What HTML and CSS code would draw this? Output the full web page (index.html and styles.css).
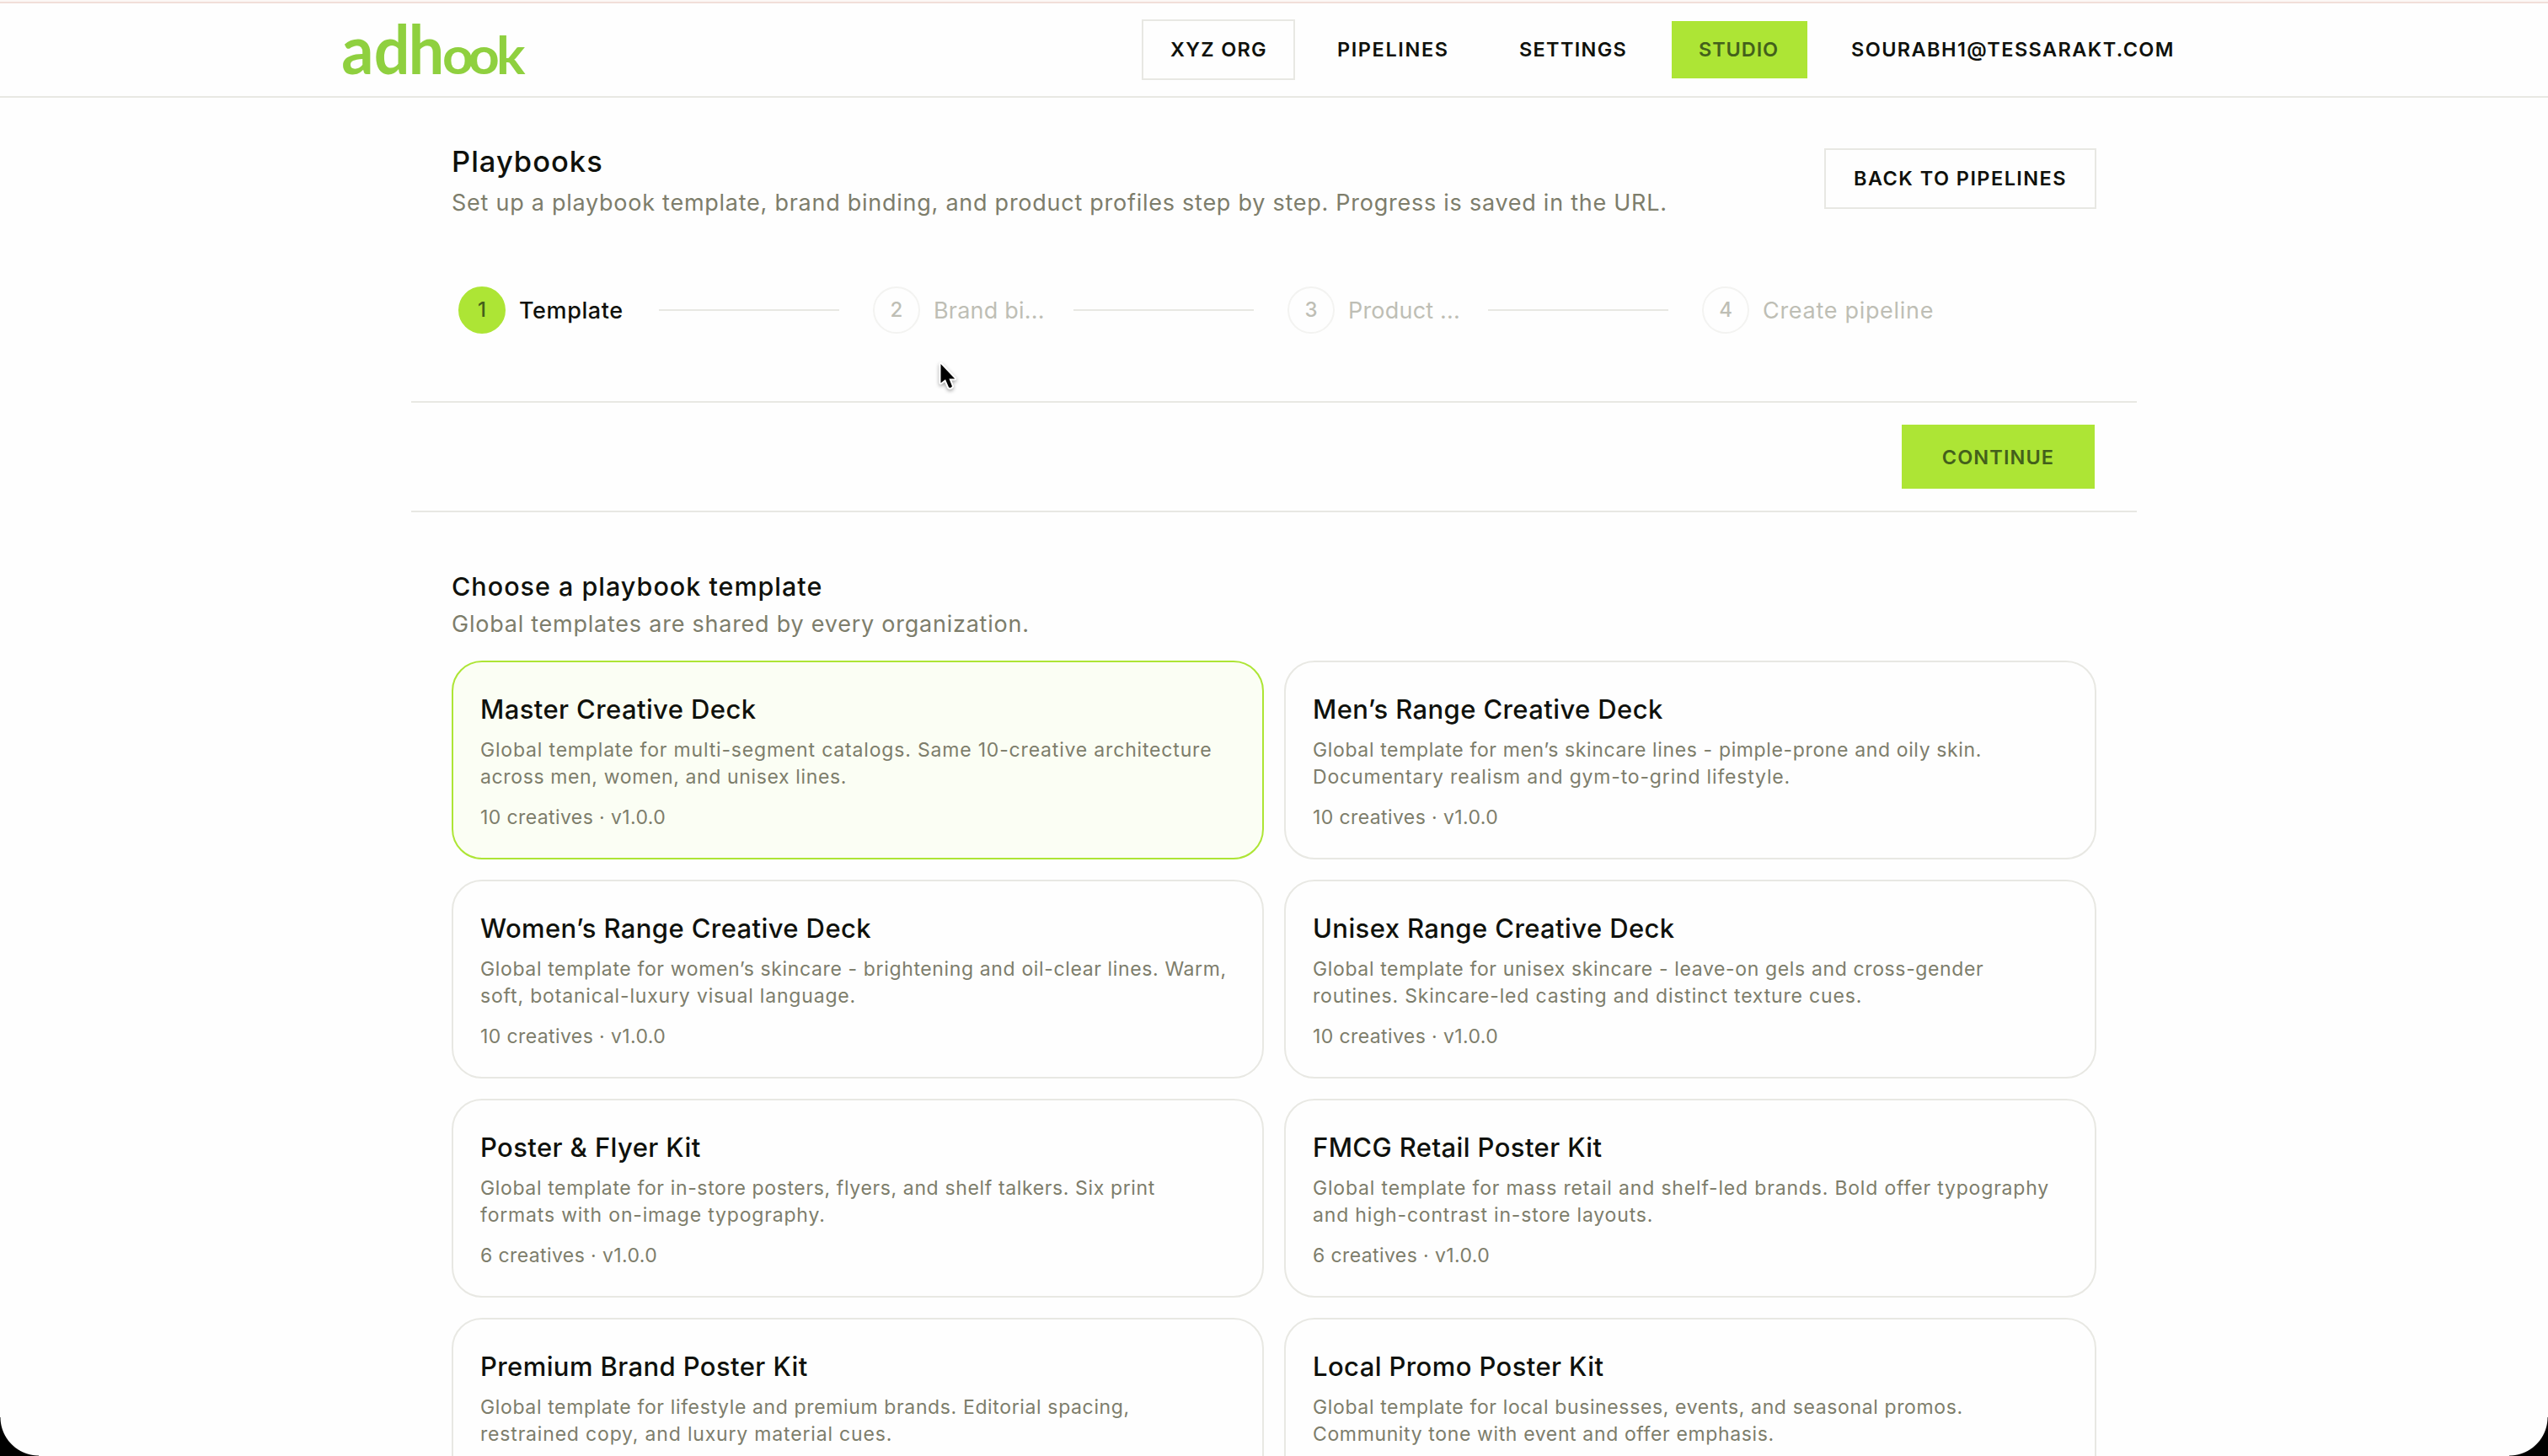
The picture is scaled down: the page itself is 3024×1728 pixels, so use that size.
FILE: index.html
```html
<!DOCTYPE html>
<html lang="en">
<head>
    <meta charset="UTF-8">
    <meta name="viewport" content="width=device-width, initial-scale=1.0">
    <title>Playbooks - adhook</title>
    <link rel="stylesheet" href="styles.css">
</head>
<body>
  <header class="navbar">
    <div class="navbar-inner">
      <a href="#" class="logo">
        <svg class="logo-img" viewBox="0 0 224 72" role="img" aria-label="adhook">
          <g transform="translate(0 64) scale(0.93 1)">
            <text class="logo-text"><tspan x="-3 38.5 82.5" class="logo-tall">adh</tspan></text>
          </g>
          <g transform="translate(0 64) scale(1.04 1)">
            <text class="logo-text"><tspan x="112.5 142 174" class="logo-round">ook</tspan></text>
          </g>
        </svg>
      </a>
      <nav class="nav-links">
        <a href="#" class="nav-link nav-org">XYZ Org</a>
        <a href="#" class="nav-link nav-pipelines">Pipelines</a>
        <a href="#" class="nav-link nav-settings">Settings</a>
        <a href="#" class="nav-link nav-studio">Studio</a>
        <a href="#" class="nav-link nav-user">sourabh1@tessarakt.com</a>
      </nav>
    </div>
  </header>

  <main class="container">
    <section class="page-header">
      <div>
        <h1>Playbooks</h1>
        <p class="subtitle">Set up a playbook template, brand binding, and product profiles step by step. Progress is saved in the URL.</p>
      </div>
      <a href="#" class="back-button">Back to pipelines</a>
    </section>

    <ol class="steps">
      <li class="step active">
        <span class="step-number">1</span>
        <span class="step-label">Template</span>
        <span class="step-line"></span>
      </li>
      <li class="step">
        <span class="step-number">2</span>
        <span class="step-label">Brand bi...</span>
        <span class="step-line"></span>
      </li>
      <li class="step">
        <span class="step-number">3</span>
        <span class="step-label">Product ...</span>
        <span class="step-line"></span>
      </li>
      <li class="step">
        <span class="step-number">4</span>
        <span class="step-label last">Create pipeline</span>
      </li>
    </ol>

    <div class="action-bar">
      <button class="continue-button">Continue</button>
    </div>

    <section class="templates">
      <h2>Choose a playbook template</h2>
      <p class="templates-note">Global templates are shared by every organization.</p>

      <div class="card-grid">
        <article class="card selected">
          <h3>Master Creative Deck</h3>
          <p class="card-text"><span class="wide">Global template for multi-segment catalogs. Same 10-creative architecture</span><br>across men, women, and unisex lines.</p>
          <p class="card-meta">10 creatives · v1.0.0</p>
        </article>
        <article class="card">
          <h3>Men’s Range Creative Deck</h3>
          <p class="card-text">Global template for men’s skincare lines - pimple-prone and oily skin.<br><span class="wide">Documentary realism and gym-to-grind lifestyle.</span></p>
          <p class="card-meta">10 creatives · v1.0.0</p>
        </article>
        <article class="card">
          <h3>Women’s Range Creative Deck</h3>
          <p class="card-text">Global template for women’s skincare - brightening and oil-clear lines. Warm,<br><span class="wide">soft, botanical-luxury visual language.</span></p>
          <p class="card-meta">10 creatives · v1.0.0</p>
        </article>
        <article class="card">
          <h3>Unisex Range Creative Deck</h3>
          <p class="card-text">Global template for unisex skincare - leave-on gels and cross-gender<br><span class="wide">routines. Skincare-led casting and distinct texture cues.</span></p>
          <p class="card-meta">10 creatives · v1.0.0</p>
        </article>
        <article class="card">
          <h3>Poster &amp; Flyer Kit</h3>
          <p class="card-text">Global template for in-store posters, flyers, and shelf talkers. Six print<br><span class="wide">formats with on-image typography.</span></p>
          <p class="card-meta">6 creatives · v1.0.0</p>
        </article>
        <article class="card">
          <h3>FMCG Retail Poster Kit</h3>
          <p class="card-text"><span class="wide">Global template for mass retail and shelf-led brands. Bold offer typography<br>and high-contrast in-store layouts.</span></p>
          <p class="card-meta">6 creatives · v1.0.0</p>
        </article>
        <article class="card">
          <h3>Premium Brand Poster Kit</h3>
          <p class="card-text">Global template for lifestyle and premium brands. Editorial spacing,<br><span class="wide">restrained copy, and luxury material cues.</span></p>
          <p class="card-meta">6 creatives · v1.0.0</p>
        </article>
        <article class="card">
          <h3>Local Promo Poster Kit</h3>
          <p class="card-text">Global template for local businesses, events, and seasonal promos.<br>Community tone with event and offer emphasis.</p>
          <p class="card-meta">6 creatives · v1.0.0</p>
        </article>
      </div>
    </section>
  </main>

  <svg class="cursor" viewBox="0 0 24 38">
    <path d="M4.5 4v22.5l5.5-4.3 4 9.3q2 1.8 4-1l-3.6-9h6.8z"/>
  </svg>
  <div class="corner corner-left"></div>
  <div class="corner corner-right"></div>
</body>
</html>
```
FILE: styles.css
```css
* {
    box-sizing: border-box;
}

html, body {
    margin: 0;
    padding: 0;
    height: 1728px;
    overflow: hidden;
    background-color: #fefefe;
    font-family: Inter, "Open Sans", sans-serif;
    color: #0f110c;
}

body {
    position: relative;
}

h1, h2, h3, p {
    margin: 0;
    font-weight: 400;
    white-space: nowrap;
}

a {
    color: inherit;
    text-decoration: none;
}

/* Navbar */
.navbar {
    height: 116px;
    border-bottom: 2px solid #e8e8e3;
    background: linear-gradient(#fcf7f5 0 2px, #f1ded9 2px 4px, #fefefe 4px);
}

.navbar-inner {
    display: flex;
    justify-content: space-between;
    width: 2208px;
    height: 114px;
    margin: 0 auto;
    padding: 4px 0 0;
}

.logo {
    padding-top: 20px;
}

.logo-img {
    display: block;
    width: 224px;
    height: 72px;
    overflow: visible;
}

.logo-text {
    font-family: Lato, sans-serif;
    font-weight: 700;
    fill: #8fd03f;
}

.logo-tall {
    font-size: 81px;
}

.logo-round {
    font-size: 62px;
}

.nav-links {
    display: flex;
    align-items: center;
    margin-right: 37px;
}

.nav-link {
    font-size: 23.5px;
    line-height: 32px;
    font-weight: 600;
    letter-spacing: 1.3px;
    text-transform: uppercase;
    white-space: nowrap;
}

.nav-org {
    width: 182px;
    margin-right: 50px;
    padding: 18px 0 18px 32px;
    border: 2px solid #e8e8e3;
}

.nav-pipelines {
    width: 216px;
    letter-spacing: 1.6px;
}

.nav-settings {
    width: 181px;
}

.nav-studio {
    width: 161px;
    margin-right: 52px;
    padding: 18px 0 18px 32px;
    background-color: #ade535;
    color: #43601b;
    letter-spacing: 0.9px;
}

.nav-user {
    width: 382px;
    letter-spacing: 1.4px;
}

/* Page header */
.container {
    width: 2048px;
    margin: 0 auto;
    padding-top: 60px;
}

.page-header {
    display: flex;
    justify-content: space-between;
    align-items: flex-start;
    height: 164px;
    padding: 0 48px;
}

h1 {
    font-size: 34.5px;
    line-height: 32px;
    font-weight: 500;
    letter-spacing: 1px;
}

.subtitle {
    margin-top: 13px;
    font-size: 27px;
    line-height: 40px;
    letter-spacing: 0.74px;
    color: #7d7d6b;
}

.back-button {
    width: 323px;
    padding: 18px 0 18px 33px;
    border: 2px solid #e8e8e3;
    font-size: 23.5px;
    line-height: 32px;
    font-weight: 600;
    letter-spacing: 1.45px;
    text-transform: uppercase;
}

/* Steps */
.steps {
    display: flex;
    height: 136px;
    margin: 0;
    padding: 0 56px;
    list-style: none;
}

.step {
    display: flex;
    flex-shrink: 0;
    align-items: center;
    width: 492px;
    height: 56px;
    color: #bebeb5;
}

.step:last-child {
    width: 300px;
}

.step-number {
    width: 56px;
    height: 56px;
    border: 2px solid #f3f3f1;
    border-radius: 50%;
    font-size: 24px;
    line-height: 52px;
    font-weight: 500;
    text-align: center;
}

.step-label {
    width: 182px;
    padding-left: 16px;
    font-size: 27px;
    letter-spacing: 0.2px;
    white-space: nowrap;
}

.step-label.last {
    letter-spacing: 0.7px;
}

.step-line {
    width: 214px;
    height: 2px;
    background-color: #e8e8e3;
}

.step.active {
    color: #0f110c;
}

.active .step-number {
    border-color: #ade535;
    background-color: #ade535;
    color: #43601b;
}

.active .step-label {
    font-weight: 500;
    letter-spacing: 0.6px;
}

/* Continue bar */
.action-bar {
    display: flex;
    justify-content: flex-end;
    height: 132px;
    padding: 26px 50px;
    border-top: 2px solid #e8e8e3;
    border-bottom: 2px solid #e8e8e3;
}

.continue-button {
    width: 229px;
    height: 76px;
    padding: 0;
    border: none;
    background-color: #ade535;
    color: #43601b;
    font-family: inherit;
    font-size: 23.5px;
    font-weight: 600;
    letter-spacing: 1.1px;
    text-transform: uppercase;
}

/* Templates */
.templates {
    padding: 68px 48px 0;
}

h2 {
    font-size: 30.5px;
    line-height: 40px;
    font-weight: 500;
    letter-spacing: 1px;
}

.templates-note {
    margin-top: 7px;
    font-size: 27px;
    line-height: 36px;
    letter-spacing: 0.76px;
    color: #7d7d6b;
}

.card-grid {
    display: grid;
    grid-template-columns: 1fr 1fr;
    gap: 24px;
    margin-top: 25px;
}

.card {
    height: 236px;
    padding: 36px 32px 0;
    border: 2px solid #e8e8e3;
    border-radius: 36px;
}

.card.selected {
    border-color: #ade535;
    background-color: #fbfef4;
}

h3 {
    font-size: 31px;
    line-height: 40px;
    font-weight: 500;
    letter-spacing: 0.4px;
}

.card-text {
    margin-top: 12px;
    font-size: 23px;
    line-height: 32px;
    letter-spacing: 0.63px;
    color: #7d7d6b;
}

.card-text .wide {
    letter-spacing: 0.82px;
}

.card-meta {
    margin-top: 16px;
    font-size: 23px;
    line-height: 32px;
    letter-spacing: 0.4px;
    color: #7d7d6b;
}

/* Pointer and window corners */
.cursor {
    position: absolute;
    left: 1112px;
    top: 428px;
    width: 24px;
    height: 38px;
    overflow: visible;
    filter: drop-shadow(0 2px 2px rgba(0, 0, 0, 0.35));
}

.cursor path {
    fill: #000;
    stroke: #fff;
    stroke-width: 4px;
    stroke-linejoin: round;
    paint-order: stroke;
}

.corner {
    position: absolute;
    bottom: 0;
    width: 46px;
    height: 46px;
}

.corner-left {
    left: 0;
    background: radial-gradient(circle at 100% 0, transparent 45px, #000 46px);
}

.corner-right {
    right: 0;
    background: radial-gradient(circle at 0 0, transparent 45px, #000 46px);
}
```
